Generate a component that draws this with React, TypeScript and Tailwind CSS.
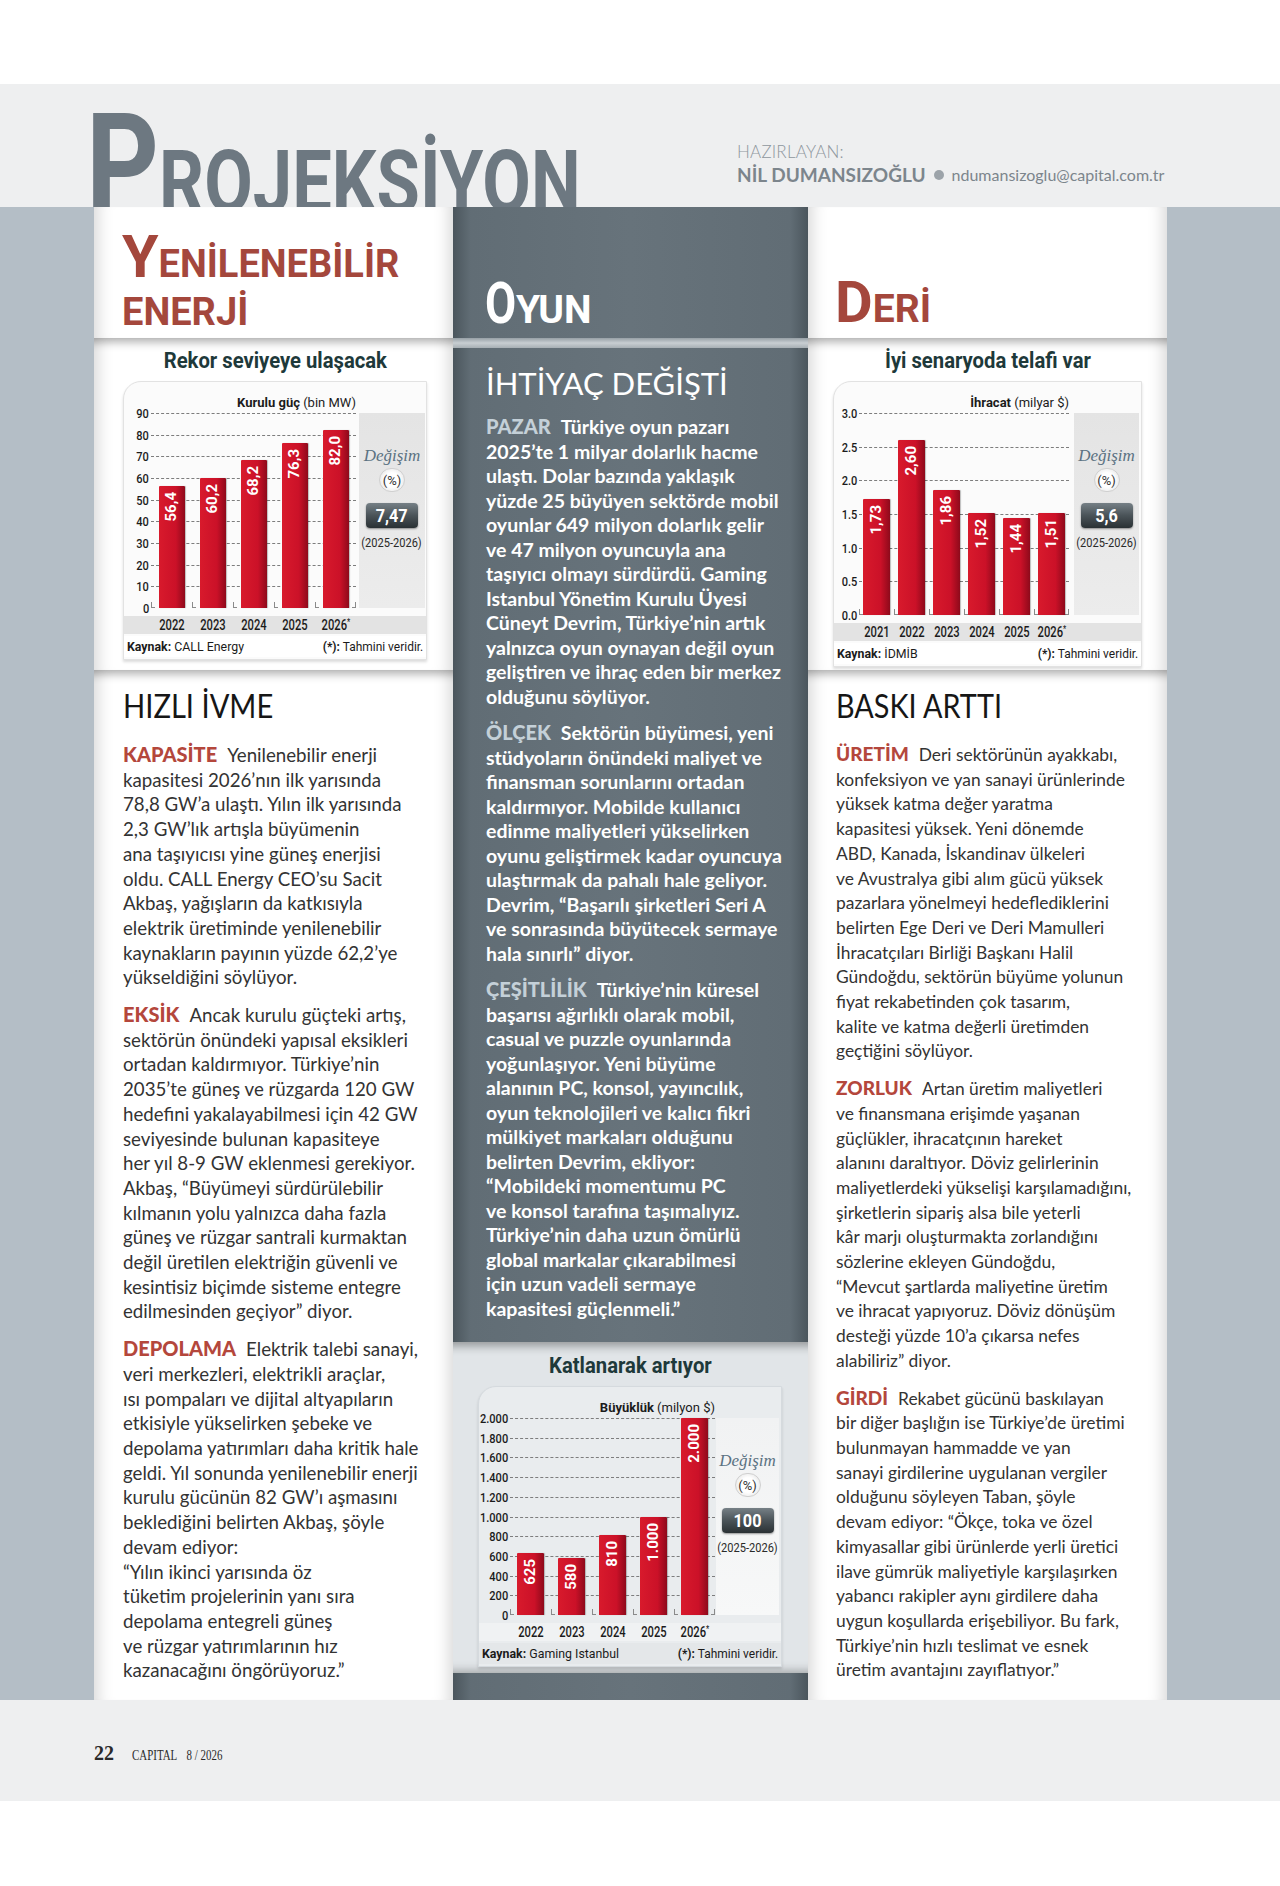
import React from 'react';

type Bar = { year: string; v: number; label: string };

type ChartProps = {
  title: string;
  unitBold: string;
  unitRest: string;
  ticks: { v: number; t: string }[];
  max: number;
  bars: Bar[];
  change: string;
  source: string;
  plotH: number;
  plotHCls: string;
  labelW: string;
  plotW: string;
  slotW: string;
  barW: string;
  panel: string;
  cardW: string;
  dark?: boolean;
};

type Para = { label: string; lines: string[] };

const DARK =
  'bg-[linear-gradient(90deg,#4b565d_0%,#616d75_5%,#67737b_50%,#616d75_95%,#4b565d_100%)]';
const WHITE_SIDES =
  'shadow-[inset_18px_0_16px_-14px_rgba(0,0,0,0.16),inset_-18px_0_16px_-14px_rgba(0,0,0,0.16)]';
const WHITE_TOP_SIDES =
  'shadow-[inset_0_14px_10px_-10px_rgba(0,0,0,0.32),inset_18px_0_16px_-14px_rgba(0,0,0,0.16),inset_-18px_0_16px_-14px_rgba(0,0,0,0.16)]';

const Chart: React.FC<ChartProps> = (p) => {
  const cardBg = p.dark ? 'bg-[#e9ecee] border-[#d5dade]' : 'bg-[#fbfbfb] border-[#e2e2e2]';
  const panelBg = p.dark
    ? 'bg-[linear-gradient(180deg,#f1f2f3,#f7f8f8)]'
    : 'bg-[linear-gradient(180deg,#e4e4e4,#ececec)]';
  const bandBg = p.dark ? 'bg-[#f0f2f3]' : 'bg-[#e3e3e3]';
  const srcBg = p.dark ? 'bg-[#e4e7e9]' : 'bg-white';
  return (
    <div className={p.cardW}>
      <h3 className="text-center font-['Roboto',sans-serif] text-[22px] font-bold leading-none text-[#1e393a]">
        <span className="inline-block scale-x-[0.92]">{p.title}</span>
      </h3>
      <div
        className={`mt-[9px] rounded-tl-[18px] border pt-[14px] pb-[2px] font-['Roboto',sans-serif] text-[#1b1b1b] shadow-[0_2px_3px_rgba(0,0,0,0.14)] ${cardBg}`}
      >
        <div className="flex">
          <div className={p.labelW} />
          <div className={`${p.plotW} whitespace-nowrap text-right text-[13px] leading-none`}>
            <b>{p.unitBold}</b> {p.unitRest}
          </div>
        </div>
        <div className="mt-[4px] flex">
          <div className={`relative ${p.labelW} ${p.plotHCls}`}>
            {p.ticks.map((t) => (
              <div
                key={t.t}
                className="absolute right-[2px] -translate-y-1/2 text-[13px] font-medium leading-none"
                style={{ top: (1 - t.v / p.max) * p.plotH }}
              >
                <span className="inline-block origin-right scale-x-[0.85]">{t.t}</span>
              </div>
            ))}
          </div>
          <div className={`relative flex items-end ${p.plotW} ${p.plotHCls}`}>
            {p.ticks
              .filter((t) => t.v > 0)
              .map((t) => (
                <div
                  key={t.t}
                  className="absolute left-0 right-0 border-t border-dashed border-[#7d7d7d]"
                  style={{ top: (1 - t.v / p.max) * p.plotH }}
                />
              ))}
            {p.bars.map((b, i) => (
              <div key={b.year} className={`relative flex h-full items-end justify-center ${p.slotW}`}>
                <span className="absolute bottom-0 left-0 h-[6px] w-[4px] border-b border-l border-[#8a8a8a]" />
                {i === p.bars.length - 1 && (
                  <span className="absolute bottom-0 right-0 h-[6px] w-[4px] border-b border-r border-[#8a8a8a]" />
                )}
                <div
                  className={`relative z-10 flex flex-col items-center rounded-t-[1px] bg-[linear-gradient(90deg,#d81a2c_0%,#cb1128_65%,#8e0a1b_100%)] shadow-[1px_0_1px_rgba(0,0,0,0.25)] ${p.barW}`}
                  style={{ height: (b.v / p.max) * p.plotH }}
                >
                  <span className="mt-[6px] rotate-180 text-[15px] font-bold leading-none text-white [writing-mode:vertical-rl]">
                    {b.label}
                  </span>
                </div>
              </div>
            ))}
          </div>
          <div className={`flex flex-col items-center pt-[33px] ${p.panel} ${panelBg}`}>
            <div className="font-['Liberation_Serif',serif] text-[17px] italic leading-[20px] text-[#5b7282]">
              Değişim
            </div>
            <div className="mt-[2px] flex h-[24px] w-[26px] items-center justify-center rounded-full border border-[#d0d0d0] bg-[radial-gradient(circle,#ffffff_45%,#dcdcdc_100%)] text-[13px] leading-none text-[#333]">
              (%)
            </div>
            <div className="mt-[11px] flex h-[25px] w-[52px] items-center justify-center rounded-[4px] bg-[linear-gradient(180deg,#768086_0%,#4a5358_50%,#2a3134_100%)] text-[18px] font-bold leading-none text-white shadow-[0_1px_2px_rgba(0,0,0,0.4)]">
              <span className="inline-block scale-x-[0.9]">{p.change}</span>
            </div>
            <div className="mt-[7px] whitespace-nowrap text-[13px] leading-[16px] text-[#2a2a2a]">
              <span className="inline-block scale-x-[0.85]">(2025-2026)</span>
            </div>
          </div>
        </div>
        <div className={`mt-[8px] flex h-[18px] items-center ${bandBg}`}>
          <div className={p.labelW} />
          {p.bars.map((b) => (
            <div key={b.year} className={`text-center text-[14px] font-medium leading-none ${p.slotW}`}>
              <span className="inline-block scale-x-[0.8]">
                {b.year.replace('*', '')}
                {b.year.includes('*') && <span className="align-top text-[9px]">*</span>}
              </span>
            </div>
          ))}
        </div>
        <div className={`mt-[2px] flex h-[21px] items-center justify-between px-[3px] text-[13px] leading-none ${srcBg}`}>
          <span className="inline-block origin-left scale-x-[0.95]">
            <b>Kaynak:</b> {p.source}
          </span>
          <span className="inline-block origin-right scale-x-[0.92]">
            <b>(*):</b> Tahmini veridir.
          </span>
        </div>
      </div>
    </div>
  );
};

const Paras: React.FC<{ paras: Para[]; labelCls: string; gap: string }> = ({ paras, labelCls, gap }) => (
  <>
    {paras.map((p, i) => (
      <div key={p.label} className={i ? gap : ''}>
        {p.lines.map((ln, j) => (
          <div key={j} className="whitespace-nowrap">
            {j === 0 && <span className={labelCls}>{p.label}</span>}
            {ln}
          </div>
        ))}
      </div>
    ))}
  </>
);

const leftParas: Para[] = [
  {
    label: 'KAPASİTE',
    lines: [
      'Yenilenebilir enerji',
      'kapasitesi 2026’nın ilk yarısında',
      '78,8 GW’a ulaştı. Yılın ilk yarısında',
      '2,3 GW’lık artışla büyümenin',
      'ana taşıyıcısı yine güneş enerjisi',
      'oldu. CALL Energy CEO’su Sacit',
      'Akbaş, yağışların da katkısıyla',
      'elektrik üretiminde yenilenebilir',
      'kaynakların payının yüzde 62,2’ye',
      'yükseldiğini söylüyor.',
    ],
  },
  {
    label: 'EKSİK',
    lines: [
      'Ancak kurulu güçteki artış,',
      'sektörün önündeki yapısal eksikleri',
      'ortadan kaldırmıyor. Türkiye’nin',
      '2035’te güneş ve rüzgarda 120 GW',
      'hedefini yakalayabilmesi için 42 GW',
      'seviyesinde bulunan kapasiteye',
      'her yıl 8-9 GW eklenmesi gerekiyor.',
      'Akbaş, “Büyümeyi sürdürülebilir',
      'kılmanın yolu yalnızca daha fazla',
      'güneş ve rüzgar santrali kurmaktan',
      'değil üretilen elektriğin güvenli ve',
      'kesintisiz biçimde sisteme entegre',
      'edilmesinden geçiyor” diyor.',
    ],
  },
  {
    label: 'DEPOLAMA',
    lines: [
      'Elektrik talebi sanayi,',
      'veri merkezleri, elektrikli araçlar,',
      'ısı pompaları ve dijital altyapıların',
      'etkisiyle yükselirken şebeke ve',
      'depolama yatırımları daha kritik hale',
      'geldi. Yıl sonunda yenilenebilir enerji',
      'kurulu gücünün 82 GW’ı aşmasını',
      'beklediğini belirten Akbaş, şöyle',
      'devam ediyor:',
      '“Yılın ikinci yarısında öz',
      'tüketim projelerinin yanı sıra',
      'depolama entegreli güneş',
      've rüzgar yatırımlarının hız',
      'kazanacağını öngörüyoruz.”',
    ],
  },
];

const midParas: Para[] = [
  {
    label: 'PAZAR',
    lines: [
      'Türkiye oyun pazarı',
      '2025’te 1 milyar dolarlık hacme',
      'ulaştı. Dolar bazında yaklaşık',
      'yüzde 25 büyüyen sektörde mobil',
      'oyunlar 649 milyon dolarlık gelir',
      've 47 milyon oyuncuyla ana',
      'taşıyıcı olmayı sürdürdü. Gaming',
      'Istanbul Yönetim Kurulu Üyesi',
      'Cüneyt Devrim, Türkiye’nin artık',
      'yalnızca oyun oynayan değil oyun',
      'geliştiren ve ihraç eden bir merkez',
      'olduğunu söylüyor.',
    ],
  },
  {
    label: 'ÖLÇEK',
    lines: [
      'Sektörün büyümesi, yeni',
      'stüdyoların önündeki maliyet ve',
      'finansman sorunlarını ortadan',
      'kaldırmıyor. Mobilde kullanıcı',
      'edinme maliyetleri yükselirken',
      'oyunu geliştirmek kadar oyuncuya',
      'ulaştırmak da pahalı hale geliyor.',
      'Devrim, “Başarılı şirketleri Seri A',
      've sonrasında büyütecek sermaye',
      'hala sınırlı” diyor.',
    ],
  },
  {
    label: 'ÇEŞİTLİLİK',
    lines: [
      'Türkiye’nin küresel',
      'başarısı ağırlıklı olarak mobil,',
      'casual ve puzzle oyunlarında',
      'yoğunlaşıyor. Yeni büyüme',
      'alanının PC, konsol, yayıncılık,',
      'oyun teknolojileri ve kalıcı fikri',
      'mülkiyet markaları olduğunu',
      'belirten Devrim, ekliyor:',
      '“Mobildeki momentumu PC',
      've konsol tarafına taşımalıyız.',
      'Türkiye’nin daha uzun ömürlü',
      'global markalar çıkarabilmesi',
      'için uzun vadeli sermaye',
      'kapasitesi güçlenmeli.”',
    ],
  },
];

const rightParas: Para[] = [
  {
    label: 'ÜRETİM',
    lines: [
      'Deri sektörünün ayakkabı,',
      'konfeksiyon ve yan sanayi ürünlerinde',
      'yüksek katma değer yaratma',
      'kapasitesi yüksek. Yeni dönemde',
      'ABD, Kanada, İskandinav ülkeleri',
      've Avustralya gibi alım gücü yüksek',
      'pazarlara yönelmeyi hedeflediklerini',
      'belirten Ege Deri ve Deri Mamulleri',
      'İhracatçıları Birliği Başkanı Halil',
      'Gündoğdu, sektörün büyüme yolunun',
      'fiyat rekabetinden çok tasarım,',
      'kalite ve katma değerli üretimden',
      'geçtiğini söylüyor.',
    ],
  },
  {
    label: 'ZORLUK',
    lines: [
      'Artan üretim maliyetleri',
      've finansmana erişimde yaşanan',
      'güçlükler, ihracatçının hareket',
      'alanını daraltıyor. Döviz gelirlerinin',
      'maliyetlerdeki yükselişi karşılamadığını,',
      'şirketlerin sipariş alsa bile yeterli',
      'kâr marjı oluşturmakta zorlandığını',
      'sözlerine ekleyen Gündoğdu,',
      '“Mevcut şartlarda maliyetine üretim',
      've ihracat yapıyoruz. Döviz dönüşüm',
      'desteği yüzde 10’a çıkarsa nefes',
      'alabiliriz” diyor.',
    ],
  },
  {
    label: 'GİRDİ',
    lines: [
      'Rekabet gücünü baskılayan',
      'bir diğer başlığın ise Türkiye’de üretimi',
      'bulunmayan hammadde ve yan',
      'sanayi girdilerine uygulanan vergiler',
      'olduğunu söyleyen Taban, şöyle',
      'devam ediyor: “Ökçe, toka ve özel',
      'kimyasallar gibi ürünlerde yerli üretici',
      'ilave gümrük maliyetiyle karşılaşırken',
      'yabancı rakipler aynı girdilere daha',
      'uygun koşullarda erişebiliyor. Bu fark,',
      'Türkiye’nin hızlı teslimat ve esnek',
      'üretim avantajını zayıflatıyor.”',
    ],
  },
];

const LABEL_LEFT = 'mr-[10px] text-[20px] font-black text-[#b4473c]';
const LABEL_RIGHT = 'mr-[10px] text-[19px] font-black text-[#b4473c]';
const LABEL_LIGHT = 'mr-[10px] text-[20px] font-black text-[#c4d0d8]';

export default function App() {
  return (
    <div className="h-[1886px] w-[1280px] bg-white font-['Lato',sans-serif]">
      <div className="h-[84px]" />

      {/* Header */}
      <header className="flex h-[123px] overflow-hidden bg-[#eeeff0]">
        <div className="w-[737px] shrink-0 self-end pl-[86px]">
          <h1 className="-mb-[27px] flex origin-left scale-x-[0.81] items-baseline font-['Roboto',sans-serif] font-bold leading-none text-[#6d7881]">
            <span className="text-[140px]">P</span>
            <span className="text-[87px]">ROJEKSİYON</span>
          </h1>
        </div>
        <div className="pt-[58px]">
          <p className="text-[17px] font-light leading-[19px] tracking-[0.2px] text-[#8e979e]">HAZIRLAYAN:</p>
          <p className="mt-[3px] flex items-center leading-[22px] text-[#7c858c]">
            <span className="text-[19px] font-bold">NİL DUMANSIZOĞLU</span>
            <span className="mx-[8px] h-[10px] w-[10px] rounded-full bg-[#9ca3a9]" />
            <span className="text-[16px]">ndumansizoglu@capital.com.tr</span>
          </p>
        </div>
      </header>

      {/* Columns */}
      <main className="flex h-[1493px] bg-[#b4bec6] pl-[94px]">
        {/* Left */}
        <section className="flex w-[359px] flex-col">
          <div className={`h-[131px] bg-white pl-[28px] pt-[20px] font-['Roboto',sans-serif] font-bold text-[#a4473c] ${WHITE_SIDES}`}>
            <div className="flex items-baseline leading-none">
              <span className="text-[59px]">Y</span>
              <span className="text-[38px]">ENİLENEBİLİR</span>
            </div>
            <div className="mt-[7px] text-[38px] leading-none">ENERJİ</div>
          </div>
          <div className={`h-[332px] bg-white pl-[29px] pt-[12px] ${WHITE_TOP_SIDES}`}>
            <Chart
              title="Rekor seviyeye ulaşacak"
              unitBold="Kurulu güç"
              unitRest="(bin MW)"
              ticks={[90, 80, 70, 60, 50, 40, 30, 20, 10, 0].map((v) => ({ v, t: String(v) }))}
              max={90}
              bars={[
                { year: '2022', v: 56.4, label: '56,4' },
                { year: '2023', v: 60.2, label: '60,2' },
                { year: '2024', v: 68.2, label: '68,2' },
                { year: '2025', v: 76.3, label: '76,3' },
                { year: '2026*', v: 82.0, label: '82,0' },
              ]}
              change="7,47"
              source="CALL Energy"
              plotH={195}
              plotHCls="h-[195px]"
              labelW="w-[27px]"
              plotW="w-[205px]"
              slotW="w-[41px]"
              barW="w-[26px]"
              panel="ml-[3px] w-[66px]"
              cardW="w-[304px]"
            />
          </div>
          <div className={`flex-1 bg-white pl-[29px] pt-[20px] text-[#333] ${WHITE_TOP_SIDES}`}>
            <h2 className="origin-left scale-x-[0.91] text-[32px] leading-none text-[#161616]">HIZLI İVME</h2>
            <div className="mt-[20px] text-[18.7px] leading-[24.7px]">
              <Paras paras={leftParas} labelCls={LABEL_LEFT} gap="mt-[12px]" />
            </div>
          </div>
        </section>

        {/* Middle */}
        <section className="flex w-[355px] flex-col">
          <div className={`h-[131px] pl-[32px] pt-[67px] font-['Roboto',sans-serif] font-bold text-white ${DARK}`}>
            <div className="flex items-baseline leading-none">
              <span className="-mr-[9px] inline-block origin-left scale-x-[0.78] text-[58px]">O</span>
              <span className="text-[39px]">YUN</span>
            </div>
          </div>
          <div className="h-[10px] bg-[linear-gradient(180deg,#97a0a6_0%,#c8ced2_50%,#a7afb4_100%)]" />
          <div className={`h-[994px] pl-[33px] pt-[20px] text-white ${DARK}`}>
            <h2 className="text-[31px] font-normal leading-none">İHTİYAÇ DEĞİŞTİ</h2>
            <div className="mt-[15px] text-[19.5px] font-bold leading-[24.5px]">
              <Paras paras={midParas} labelCls={LABEL_LIGHT} gap="mt-[11px]" />
            </div>
          </div>
          <div className="h-[331px] bg-[#e1e5e8] pl-[25px] pt-[13px] shadow-[inset_0_14px_10px_-10px_rgba(0,0,0,0.35),inset_0_-12px_10px_-10px_rgba(0,0,0,0.3)]">
            <Chart
              dark
              title="Katlanarak artıyor"
              unitBold="Büyüklük"
              unitRest="(milyon $)"
              ticks={[2000, 1800, 1600, 1400, 1200, 1000, 800, 600, 400, 200, 0].map((v) => ({
                v,
                t: v >= 1000 ? `${Math.floor(v / 1000)}.${String(v % 1000).padStart(3, '0')}` : String(v),
              }))}
              max={2000}
              bars={[
                { year: '2022', v: 625, label: '625' },
                { year: '2023', v: 580, label: '580' },
                { year: '2024', v: 810, label: '810' },
                { year: '2025', v: 1000, label: '1.000' },
                { year: '2026*', v: 2000, label: '2.000' },
              ]}
              change="100"
              source="Gaming Istanbul"
              plotH={197}
              plotHCls="h-[197px]"
              labelW="w-[31px]"
              plotW="w-[205px]"
              slotW="w-[41px]"
              barW="w-[27px]"
              panel="ml-[1px] w-[63px]"
              cardW="w-[304px]"
            />
          </div>
          <div className={`flex-1 ${DARK}`} />
        </section>

        {/* Right */}
        <section className="flex w-[359px] flex-col">
          <div className={`h-[131px] bg-white pl-[27px] pt-[66px] font-['Roboto',sans-serif] font-bold text-[#a4473c] ${WHITE_SIDES}`}>
            <div className="flex items-baseline leading-none">
              <span className="text-[58px]">D</span>
              <span className="text-[39px]">ERİ</span>
            </div>
          </div>
          <div className={`h-[332px] bg-white pl-[25px] pt-[12px] ${WHITE_TOP_SIDES}`}>
            <Chart
              title="İyi senaryoda telafi var"
              unitBold="İhracat"
              unitRest="(milyar $)"
              ticks={[3, 2.5, 2, 1.5, 1, 0.5, 0].map((v) => ({ v, t: v.toFixed(1) }))}
              max={3}
              bars={[
                { year: '2021', v: 1.73, label: '1,73' },
                { year: '2022', v: 2.6, label: '2,60' },
                { year: '2023', v: 1.86, label: '1,86' },
                { year: '2024', v: 1.52, label: '1,52' },
                { year: '2025', v: 1.44, label: '1,44' },
                { year: '2026*', v: 1.51, label: '1,51' },
              ]}
              change="5,6"
              source="İDMİB"
              plotH={202}
              plotHCls="h-[202px]"
              labelW="w-[25px]"
              plotW="w-[210px]"
              slotW="w-[35px]"
              barW="w-[27px]"
              panel="ml-[5px] w-[65px]"
              cardW="w-[309px]"
            />
          </div>
          <div className={`flex-1 bg-white pl-[28px] pt-[20px] text-[#333] ${WHITE_TOP_SIDES}`}>
            <h2 className="origin-left scale-x-[0.9] text-[32px] leading-none text-[#161616]">BASKI ARTTI</h2>
            <div className="mt-[20px] text-[17.4px] leading-[24.7px]">
              <Paras paras={rightParas} labelCls={LABEL_RIGHT} gap="mt-[12px]" />
            </div>
          </div>
        </section>
      </main>

      {/* Footer */}
      <footer className="flex h-[101px] items-baseline bg-[#eeeff0] pl-[94px] pt-[43px] font-['Liberation_Serif',serif] leading-none text-[#2a2a2a]">
        <span className="text-[20px] font-bold">22</span>
        <span className="ml-[18px] inline-block origin-left scale-x-[0.78] text-[14px]">
          CAPITAL<span className="ml-[12px]">8 / 2026</span>
        </span>
      </footer>
    </div>
  );
}
